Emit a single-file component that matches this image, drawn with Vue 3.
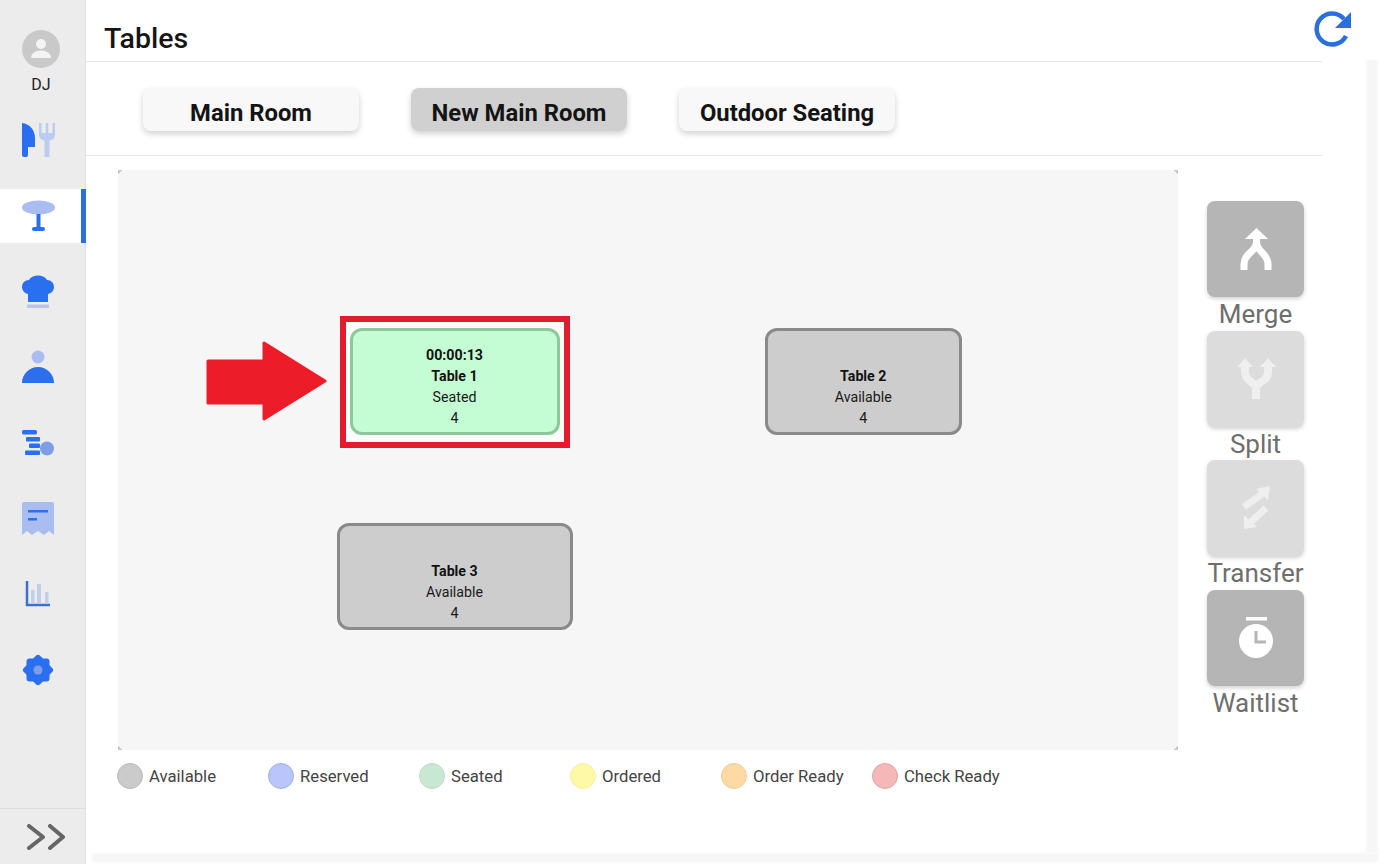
<script setup>
const tabs = [
  { name: 'Main Room', active: false },
  { name: 'New Main Room', active: true },
  { name: 'Outdoor Seating', active: false },
]
const tables = [
  { id: 1, timer: '00:00:13', name: 'Table 1', status: 'Seated', seats: 4, kind: 'seated', left: 231.5, top: 158, width: 210 },
  { id: 2, name: 'Table 2', status: 'Available', seats: 4, kind: 'free', left: 646.5, top: 158, width: 197.5 },
  { id: 3, name: 'Table 3', status: 'Available', seats: 4, kind: 'free', left: 218.5, top: 353, width: 236 },
]
const legend = [
  { label: 'Available', color: '#cbcbcb', edge: '#b8b8b8' },
  { label: 'Reserved', color: '#b9c6fb', edge: '#a3add8' },
  { label: 'Seated', color: '#c9e8d3', edge: '#bcdcc7' },
  { label: 'Ordered', color: '#fdf9a6', edge: '#f3efa0' },
  { label: 'Order Ready', color: '#fdd9a4', edge: '#eccb9a' },
  { label: 'Check Ready', color: '#f5b7b7', edge: '#dca5a5' },
]
</script>

<template>
  <div class="app">
    <aside class="sidebar">
      <div class="user">
        <svg class="avatar" viewBox="0 0 38 38">
          <circle cx="19" cy="19" r="19" fill="#c9c9c9" />
          <circle cx="19" cy="14" r="5" fill="#f4f4f4" />
          <path d="M9 28c0-5 5-7.500 10-7.500s10 2.500 10 7.500z" fill="#f4f4f4" />
        </svg>
        <span class="initials">DJ</span>
      </div>
      <nav class="nav">
        <div class="nav-item">
          <svg class="nav-icon" viewBox="0 0 40 40">
            <path d="M4 3c8 1 13 7 13 15v9H10v8c0 1.500-1 2-3 2s-3-.5-3-2z" fill="#2a6ff0" />
            <path d="M21 3h2.500v10h4.250V3h2.500v10h4.250V3H37v12c0 3-2 5-5.500 5.500V37h-5V20.500C23 20 21 18 21 15z" fill="#bccbf0" />
          </svg>
        </div>
        <div class="nav-item active">
          <svg class="nav-icon" viewBox="0 0 40 40">
            <ellipse cx="20.500" cy="11.500" rx="16.500" ry="7" fill="#a9bdf0" />
            <rect x="18.500" y="18" width="4" height="14" fill="#2a6ff0" />
            <rect x="14" y="31" width="13" height="4" rx="2" fill="#2a6ff0" />
          </svg>
        </div>
        <div class="nav-item">
          <svg class="nav-icon" viewBox="0 0 40 40">
            <path d="M10 30v-8c-4-1-6-4-6-7 0-4 3-7 7-7 1.500-3 5-4.500 9-4.500s7.500 1.500 9 4.500c4 0 7 3 7 7 0 3-2 6-6 7v8z" fill="#2a6ff0" />
            <rect x="9" y="32.500" width="22" height="3.500" fill="#b9c6ea" />
          </svg>
        </div>
        <div class="nav-item">
          <svg class="nav-icon" viewBox="0 0 40 40">
            <circle cx="20" cy="10" r="6.500" fill="#a9bdf0" />
            <path d="M4 36a16 16 0 0 1 32 0z" fill="#2a6ff0" />
          </svg>
        </div>
        <div class="nav-item">
          <svg class="nav-icon" viewBox="0 0 40 40">
            <rect x="4" y="7" width="15" height="4.500" rx="1.500" fill="#2a6ff0" />
            <rect x="8" y="14" width="14" height="4.500" rx="1" fill="#2a6ff0" />
            <rect x="11" y="20.500" width="11" height="4.500" rx="1" fill="#2a6ff0" />
            <rect x="7" y="27.500" width="15" height="4.500" rx="1" fill="#2a6ff0" />
            <circle cx="29" cy="25.500" r="7" fill="#7f9ee8" />
          </svg>
        </div>
        <div class="nav-item">
          <svg class="nav-icon" viewBox="0 0 40 40">
            <path d="M6 4h28a2 2 0 0 1 2 2v31l-5-4-5 4-6-4-6 4-5-4-5 4V6a2 2 0 0 1 2-2z" fill="#a9bdf0" />
            <rect x="10" y="12" width="20" height="2.500" fill="#2a6ff0" />
            <rect x="10" y="20" width="9" height="2.500" fill="#2a6ff0" />
          </svg>
        </div>
        <div class="nav-item">
          <svg class="nav-icon" viewBox="0 0 40 40">
            <rect x="13" y="16" width="3.500" height="13" fill="#c3cee8" />
            <rect x="19" y="10" width="4" height="19" fill="#c3cee8" />
            <rect x="27" y="18" width="3.500" height="11" fill="#c3cee8" />
            <path d="M9 7v24h23" fill="none" stroke="#3e6ed0" stroke-width="2.500" />
          </svg>
        </div>
        <div class="nav-item">
          <svg class="nav-icon" viewBox="0 0 40 40">
            <rect x="8.500" y="8.500" width="23" height="23" rx="3" fill="#2a6ff0" />
            <rect x="8.500" y="8.500" width="23" height="23" rx="3" fill="#2a6ff0" transform="rotate(45 20 20)" />
            <circle cx="20" cy="20" r="4.500" fill="#7f9ee8" />
          </svg>
        </div>
      </nav>
      <div class="expander">
        <svg class="chevrons" viewBox="0 0 40 26">
          <path d="M3 2l14 11L3 24M24 2l13 11-13 11" fill="none" stroke="#666" stroke-width="4" stroke-linecap="round" stroke-linejoin="round" />
        </svg>
      </div>
    </aside>

    <main class="main">
      <header class="topbar">
        <h1 class="title">Tables</h1>
        <svg class="refresh" viewBox="0 0 38 38">
          <path d="M32 26a15.500 15.500 0 1 1-2-17" fill="none" stroke="#2a6fdb" stroke-width="4.500" />
          <path d="M37 2v16H21z" fill="#2a6fdb" />
        </svg>
      </header>
      <div class="rule"></div>
      <div class="tabs">
        <button v-for="t in tabs" :key="t.name" class="tab" :class="{ on: t.active }">{{ t.name }}</button>
      </div>
      <div class="rule"></div>

      <div class="body">
        <section class="floor">
          <div class="marker"></div>
          <svg class="arrow" viewBox="0 0 122 80">
            <path d="M2 20h56V2l61 38-61 38V62H2z" fill="#ed1c29" stroke="#ed1c29" stroke-width="3" stroke-linejoin="round" />
          </svg>
          <div
            v-for="t in tables"
            :key="t.id"
            class="table"
            :class="t.kind"
            :style="{ left: t.left + 'px', top: t.top + 'px', width: t.width + 'px' }"
          >
            <b v-if="t.timer">{{ t.timer }}</b>
            <b>{{ t.name }}</b>
            <span>{{ t.status }}</span>
            <span>{{ t.seats }}</span>
          </div>
        </section>

        <div class="actions">
          <div class="action">
            <div class="action-btn">
              <svg viewBox="0 0 48 48" class="action-icon">
                <path d="M12 45v-6c0-11 12.500-12 12.500-22v-6M36 45v-6c0-11-11.500-12-11.500-22v-6" fill="none" stroke="#fff" stroke-width="7" />
                <path d="M13 14L24.500 3 36 14z" fill="#fff" />
              </svg>
            </div>
            <span class="action-label">Merge</span>
          </div>
          <div class="action dim">
            <div class="action-btn">
              <svg viewBox="0 0 48 48" class="action-icon">
                <path d="M24 44V33c0-6-11-6-11-16v-6M24 33c0-6 12-6 12-16v-6" fill="none" stroke="#efefef" stroke-width="8" />
                <path d="M5 12l8-9 8 9zM28 12l8-9 8 9z" fill="#efefef" />
              </svg>
            </div>
            <span class="action-label">Split</span>
          </div>
          <div class="action dim">
            <div class="action-btn">
              <svg viewBox="0 0 48 48" class="action-icon">
                <path d="M12 23L30 10" fill="none" stroke="#efefef" stroke-width="7" />
                <path d="M38 2L24 5l12 11z" fill="#efefef" />
                <path d="M34 24L19 38" fill="none" stroke="#efefef" stroke-width="7" />
                <path d="M12 45V31l13 12z" fill="#efefef" />
              </svg>
            </div>
            <span class="action-label">Transfer</span>
          </div>
          <div class="action">
            <div class="action-btn">
              <svg viewBox="0 0 48 48" class="action-icon">
                <rect x="14" y="3" width="21" height="3.500" fill="#fff" />
                <circle cx="24" cy="27" r="17" fill="#fff" />
                <path d="M24 17v11h10" fill="none" stroke="#b5b5b5" stroke-width="3" />
              </svg>
            </div>
            <span class="action-label">Waitlist</span>
          </div>
        </div>
      </div>

      <div class="legend">
        <div v-for="l in legend" :key="l.label" class="legend-item">
          <span class="dot" :style="{ background: l.color, borderColor: l.edge }"></span>
          <span>{{ l.label }}</span>
        </div>
      </div>
    </main>

    <div class="strip-v"></div>
    <div class="strip-h"></div>
  </div>
</template>

<style scoped>
.app {
  position: relative;
  display: flex;
  width: 1383px;
  height: 864px;
  overflow: hidden;
  background: #fff;
  font-family: Roboto, "Liberation Sans", sans-serif;
  color: #111;
}
.sidebar {
  width: 86px;
  height: 864px;
  flex: none;
  display: flex;
  flex-direction: column;
  background: #ececec;
  box-shadow: inset -1px 0 0 #e0e0e0;
}
.user {
  height: 113.4px;
  padding: 30px 4px 0 0;
  box-sizing: border-box;
  display: flex;
  flex-direction: column;
  align-items: center;
}
.avatar {
  width: 38px;
  height: 38px;
}
.initials {
  margin-top: 7px;
  font-size: 16px;
  line-height: 20px;
  color: #222;
}
.nav {
  display: flex;
  flex-direction: column;
  gap: 21.6px;
  flex: 1;
}
.nav-item {
  height: 54px;
  padding-left: 18px;
  display: flex;
  align-items: center;
  box-sizing: border-box;
}
.nav-item.active {
  background: #fff;
  border-right: 5px solid #2a6fdb;
}
.nav-icon {
  width: 40px;
  height: 40px;
}
.expander {
  height: 56px;
  border-top: 1px solid #dcdcdc;
  display: flex;
  align-items: center;
  padding-left: 26px;
  box-sizing: border-box;
}
.chevrons {
  width: 40px;
  height: 26px;
}
.main {
  flex: 1;
  min-width: 0;
}
.topbar {
  height: 61px;
  display: flex;
  justify-content: space-between;
  padding: 10px 31px 0 18px;
  box-sizing: border-box;
}
.title {
  margin: 11px 0 0;
  font-size: 28.5px;
  font-weight: 500;
  line-height: 36px;
  color: #151515;
}
.refresh {
  width: 38px;
  height: 38px;
}
.rule {
  width: 1236px;
  height: 1px;
  background: #e8e8e8;
}
.tabs {
  height: 93px;
  padding: 26px 0 0 57px;
  box-sizing: border-box;
  display: flex;
  gap: 52px;
  align-items: flex-start;
}
.tab {
  width: 216px;
  height: 43px;
  border: none;
  border-radius: 8px;
  background: #f8f8f8;
  box-shadow: 0 3px 6px rgba(0, 0, 0, 0.18);
  font-family: inherit;
  font-size: 23.8px;
  font-weight: 700;
  color: #141414;
  padding: 7px 0 0;
}
.tab.on {
  background: #d0d0d0;
}
.body {
  display: flex;
  margin: 14px 0 0 32px;
}
.floor {
  position: relative;
  width: 1060px;
  height: 580px;
  flex: none;
  background: #f6f6f6;
}
.marker {
  position: absolute;
  inset: 0;
  background:
    linear-gradient(135deg, #c9c9c9 3px, transparent 3px) top left / 5px 5px no-repeat,
    linear-gradient(225deg, #c9c9c9 3px, transparent 3px) top right / 5px 5px no-repeat,
    linear-gradient(45deg, #c9c9c9 3px, transparent 3px) bottom left / 5px 5px no-repeat,
    linear-gradient(315deg, #c9c9c9 3px, transparent 3px) bottom right / 5px 5px no-repeat;
}
.marker::after {
  content: "";
  position: absolute;
  left: 222px;
  top: 146px;
  width: 230px;
  height: 132px;
  box-sizing: border-box;
  border: 6px solid #e31b2c;
  background: #fafcfa;
}
.arrow {
  position: absolute;
  left: 88px;
  top: 171px;
  width: 122px;
  height: 80px;
}
.table {
  position: absolute;
  height: 107px;
  box-sizing: border-box;
  border: 3px solid;
  border-radius: 12px;
  padding-bottom: 3px;
  display: flex;
  flex-direction: column;
  justify-content: flex-end;
  align-items: center;
  font-size: 14.2px;
  line-height: 21px;
  color: #1a1a1a;
}
.table b {
  font-weight: 700;
  color: #111;
}
.table.seated {
  background: #c4fdd4;
  border-color: #8fc79c;
}
.table.free {
  background: #cdcdcd;
  border-color: #8a8a8a;
}
.actions {
  margin: 31px 0 0 29px;
  width: 97px;
  display: flex;
  flex-direction: column;
}
.action {
  height: 129.5px;
  display: flex;
  flex-direction: column;
  align-items: center;
  flex: none;
}
.action-btn {
  width: 97px;
  height: 96px;
  flex: none;
  border-radius: 8px;
  background: #b5b5b5;
  box-shadow: 0 2px 4px rgba(0, 0, 0, 0.18);
  display: flex;
  align-items: center;
  justify-content: center;
}
.dim .action-btn {
  background: #dcdcdc;
}
.action-icon {
  width: 48px;
  height: 48px;
}
.action-label {
  font-size: 26px;
  line-height: 34px;
  color: #6e6e6e;
  white-space: nowrap;
}
.legend {
  display: flex;
  margin: 13px 0 0 31px;
}
.legend-item {
  width: 151px;
  display: flex;
  align-items: center;
  gap: 6px;
  font-size: 16.7px;
  color: #444;
}
.dot {
  width: 26px;
  height: 26px;
  box-sizing: border-box;
  border: 1px solid;
  border-radius: 50%;
  flex: none;
}
.strip-v {
  position: absolute;
  left: 1366px;
  top: 60px;
  width: 12px;
  height: 792px;
  background: #f6f6f6;
  filter: blur(1px);
}
.strip-h {
  position: absolute;
  left: 92px;
  top: 853px;
  width: 1286px;
  height: 9px;
  background: #f6f6f6;
  filter: blur(1px);
}
</style>

<style>
body {
  margin: 0;
  background: #fff;
}
</style>
